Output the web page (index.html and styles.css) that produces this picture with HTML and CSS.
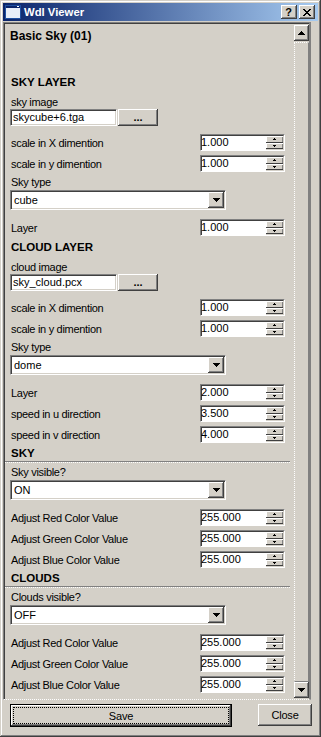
FILE: index.html
```html
<!DOCTYPE html>
<html>
<head>
<meta charset="utf-8">
<title>Wdl Viewer</title>
<link rel="stylesheet" href="styles.css">
</head>
<body>
<div class="window">
  <div class="titlebar">
    <svg class="app-icon" viewBox="0 0 16 14" shape-rendering="crispEdges">
      <rect x="0" y="0" width="16" height="14" fill="#2050a0"/>
      <rect x="1" y="3" width="14" height="10" fill="#e8eef8"/>
      <rect x="1" y="1" width="14" height="2" fill="#0a246a"/>
      <rect x="12" y="1" width="2" height="1" fill="#fff"/>
    </svg>
    <span class="title">Wdl Viewer</span>
    <div class="caption-btns">
      <div class="cap-btn raised">?</div>
      <div class="cap-btn raised">
        <svg class="glyph-x" viewBox="0 0 8 7" shape-rendering="crispEdges"><path d="M0 0h2v1H0z M6 0h2v1H6z M1 1h2v1H1z M5 1h2v1H5z M2 2h4v1H2z M3 3h2v1H3z M2 4h4v1H2z M1 5h2v1H1z M5 5h2v1H5z M0 6h2v1H0z M6 6h2v1H6z" fill="#000"/></svg>
      </div>
    </div>
  </div>

  <div class="pane">
    <div class="content">
      <div class="doc-title">Basic Sky (01)</div>

      <div class="heading">SKY LAYER</div>
      <div class="label">sky image</div>
      <div class="file-row">
        <div class="textbox">skycube+6.tga</div>
        <div class="browse raised">...</div>
      </div>
      <div class="spin-row"><span class="text">scale in X dimention</span>
        <div class="spin"><div class="spin-field">1.000</div><div class="spin-btns"><div class="spin-btn"><svg class="mini" viewBox="0 0 3 2" shape-rendering="crispEdges"><path d="M1 0h1v1H1z M0 1h3v1H0z"/></svg></div><div class="spin-btn"><svg class="mini" viewBox="0 0 3 2" shape-rendering="crispEdges"><path d="M0 0h3v1H0z M1 1h1v1H1z"/></svg></div></div></div>
      </div>
      <div class="spin-row"><span class="text">scale in y dimention</span>
        <div class="spin"><div class="spin-field">1.000</div><div class="spin-btns"><div class="spin-btn"><svg class="mini" viewBox="0 0 3 2" shape-rendering="crispEdges"><path d="M1 0h1v1H1z M0 1h3v1H0z"/></svg></div><div class="spin-btn"><svg class="mini" viewBox="0 0 3 2" shape-rendering="crispEdges"><path d="M0 0h3v1H0z M1 1h1v1H1z"/></svg></div></div></div>
      </div>
      <div class="label">Sky type</div>
      <div class="select"><span class="select-value">cube</span><span class="dd-btn raised"><svg class="arrow" viewBox="0 0 7 4" shape-rendering="crispEdges"><path d="M0 0h7v1H0z M1 1h5v1H1z M2 2h3v1H2z M3 3h1v1H3z"/></svg></span></div>
      <div class="spin-row"><span class="text">Layer</span>
        <div class="spin"><div class="spin-field">1.000</div><div class="spin-btns"><div class="spin-btn"><svg class="mini" viewBox="0 0 3 2" shape-rendering="crispEdges"><path d="M1 0h1v1H1z M0 1h3v1H0z"/></svg></div><div class="spin-btn"><svg class="mini" viewBox="0 0 3 2" shape-rendering="crispEdges"><path d="M0 0h3v1H0z M1 1h1v1H1z"/></svg></div></div></div>
      </div>

      <div class="heading">CLOUD LAYER</div>
      <div class="label">cloud image</div>
      <div class="file-row">
        <div class="textbox">sky_cloud.pcx</div>
        <div class="browse raised">...</div>
      </div>
      <div class="spin-row"><span class="text">scale in X dimention</span>
        <div class="spin"><div class="spin-field">1.000</div><div class="spin-btns"><div class="spin-btn"><svg class="mini" viewBox="0 0 3 2" shape-rendering="crispEdges"><path d="M1 0h1v1H1z M0 1h3v1H0z"/></svg></div><div class="spin-btn"><svg class="mini" viewBox="0 0 3 2" shape-rendering="crispEdges"><path d="M0 0h3v1H0z M1 1h1v1H1z"/></svg></div></div></div>
      </div>
      <div class="spin-row"><span class="text">scale in y dimention</span>
        <div class="spin"><div class="spin-field">1.000</div><div class="spin-btns"><div class="spin-btn"><svg class="mini" viewBox="0 0 3 2" shape-rendering="crispEdges"><path d="M1 0h1v1H1z M0 1h3v1H0z"/></svg></div><div class="spin-btn"><svg class="mini" viewBox="0 0 3 2" shape-rendering="crispEdges"><path d="M0 0h3v1H0z M1 1h1v1H1z"/></svg></div></div></div>
      </div>
      <div class="label">Sky type</div>
      <div class="select"><span class="select-value">dome</span><span class="dd-btn raised"><svg class="arrow" viewBox="0 0 7 4" shape-rendering="crispEdges"><path d="M0 0h7v1H0z M1 1h5v1H1z M2 2h3v1H2z M3 3h1v1H3z"/></svg></span></div>
      <div class="spin-row"><span class="text">Layer</span>
        <div class="spin"><div class="spin-field">2.000</div><div class="spin-btns"><div class="spin-btn"><svg class="mini" viewBox="0 0 3 2" shape-rendering="crispEdges"><path d="M1 0h1v1H1z M0 1h3v1H0z"/></svg></div><div class="spin-btn"><svg class="mini" viewBox="0 0 3 2" shape-rendering="crispEdges"><path d="M0 0h3v1H0z M1 1h1v1H1z"/></svg></div></div></div>
      </div>
      <div class="spin-row"><span class="text">speed in u direction</span>
        <div class="spin"><div class="spin-field">3.500</div><div class="spin-btns"><div class="spin-btn"><svg class="mini" viewBox="0 0 3 2" shape-rendering="crispEdges"><path d="M1 0h1v1H1z M0 1h3v1H0z"/></svg></div><div class="spin-btn"><svg class="mini" viewBox="0 0 3 2" shape-rendering="crispEdges"><path d="M0 0h3v1H0z M1 1h1v1H1z"/></svg></div></div></div>
      </div>
      <div class="spin-row"><span class="text">speed in v direction</span>
        <div class="spin"><div class="spin-field">4.000</div><div class="spin-btns"><div class="spin-btn"><svg class="mini" viewBox="0 0 3 2" shape-rendering="crispEdges"><path d="M1 0h1v1H1z M0 1h3v1H0z"/></svg></div><div class="spin-btn"><svg class="mini" viewBox="0 0 3 2" shape-rendering="crispEdges"><path d="M0 0h3v1H0z M1 1h1v1H1z"/></svg></div></div></div>
      </div>

      <div class="heading ruled">SKY</div>
      <div class="rule"></div>
      <div class="label">Sky visible?</div>
      <div class="select"><span class="select-value">ON</span><span class="dd-btn raised"><svg class="arrow" viewBox="0 0 7 4" shape-rendering="crispEdges"><path d="M0 0h7v1H0z M1 1h5v1H1z M2 2h3v1H2z M3 3h1v1H3z"/></svg></span></div>
      <div class="spin-row"><span class="text">Adjust Red Color Value</span>
        <div class="spin"><div class="spin-field">255.000</div><div class="spin-btns"><div class="spin-btn"><svg class="mini" viewBox="0 0 3 2" shape-rendering="crispEdges"><path d="M1 0h1v1H1z M0 1h3v1H0z"/></svg></div><div class="spin-btn"><svg class="mini" viewBox="0 0 3 2" shape-rendering="crispEdges"><path d="M0 0h3v1H0z M1 1h1v1H1z"/></svg></div></div></div>
      </div>
      <div class="spin-row"><span class="text">Adjust Green Color Value</span>
        <div class="spin"><div class="spin-field">255.000</div><div class="spin-btns"><div class="spin-btn"><svg class="mini" viewBox="0 0 3 2" shape-rendering="crispEdges"><path d="M1 0h1v1H1z M0 1h3v1H0z"/></svg></div><div class="spin-btn"><svg class="mini" viewBox="0 0 3 2" shape-rendering="crispEdges"><path d="M0 0h3v1H0z M1 1h1v1H1z"/></svg></div></div></div>
      </div>
      <div class="spin-row"><span class="text">Adjust Blue Color Value</span>
        <div class="spin"><div class="spin-field">255.000</div><div class="spin-btns"><div class="spin-btn"><svg class="mini" viewBox="0 0 3 2" shape-rendering="crispEdges"><path d="M1 0h1v1H1z M0 1h3v1H0z"/></svg></div><div class="spin-btn"><svg class="mini" viewBox="0 0 3 2" shape-rendering="crispEdges"><path d="M0 0h3v1H0z M1 1h1v1H1z"/></svg></div></div></div>
      </div>

      <div class="heading ruled">CLOUDS</div>
      <div class="rule"></div>
      <div class="label">Clouds visible?</div>
      <div class="select"><span class="select-value">OFF</span><span class="dd-btn raised"><svg class="arrow" viewBox="0 0 7 4" shape-rendering="crispEdges"><path d="M0 0h7v1H0z M1 1h5v1H1z M2 2h3v1H2z M3 3h1v1H3z"/></svg></span></div>
      <div class="spin-row"><span class="text">Adjust Red Color Value</span>
        <div class="spin"><div class="spin-field">255.000</div><div class="spin-btns"><div class="spin-btn"><svg class="mini" viewBox="0 0 3 2" shape-rendering="crispEdges"><path d="M1 0h1v1H1z M0 1h3v1H0z"/></svg></div><div class="spin-btn"><svg class="mini" viewBox="0 0 3 2" shape-rendering="crispEdges"><path d="M0 0h3v1H0z M1 1h1v1H1z"/></svg></div></div></div>
      </div>
      <div class="spin-row"><span class="text">Adjust Green Color Value</span>
        <div class="spin"><div class="spin-field">255.000</div><div class="spin-btns"><div class="spin-btn"><svg class="mini" viewBox="0 0 3 2" shape-rendering="crispEdges"><path d="M1 0h1v1H1z M0 1h3v1H0z"/></svg></div><div class="spin-btn"><svg class="mini" viewBox="0 0 3 2" shape-rendering="crispEdges"><path d="M0 0h3v1H0z M1 1h1v1H1z"/></svg></div></div></div>
      </div>
      <div class="spin-row"><span class="text">Adjust Blue Color Value</span>
        <div class="spin"><div class="spin-field">255.000</div><div class="spin-btns"><div class="spin-btn"><svg class="mini" viewBox="0 0 3 2" shape-rendering="crispEdges"><path d="M1 0h1v1H1z M0 1h3v1H0z"/></svg></div><div class="spin-btn"><svg class="mini" viewBox="0 0 3 2" shape-rendering="crispEdges"><path d="M0 0h3v1H0z M1 1h1v1H1z"/></svg></div></div></div>
      </div>
    </div>

    <div class="scrollbar">
      <div class="sb-btn raised"><svg class="arrow" viewBox="0 0 7 4" shape-rendering="crispEdges"><path d="M3 0h1v1H3z M2 1h3v1H2z M1 2h5v1H1z M0 3h7v1H0z"/></svg></div>
      <div class="sb-thumb"></div>
      <div class="sb-btn raised"><svg class="arrow" viewBox="0 0 7 4" shape-rendering="crispEdges"><path d="M0 0h7v1H0z M1 1h5v1H1z M2 2h3v1H2z M3 3h1v1H3z"/></svg></div>
    </div>
  </div>

  <div class="footer">
    <div class="btn btn-default raised"><span class="focus">Save</span></div>
    <div class="btn btn-close raised">Close</div>
  </div>
</div>
</body>
</html>
```

FILE: styles.css
```css
* { box-sizing: border-box; margin: 0; padding: 0; }

html, body {
  width: 321px;
  height: 737px;
  overflow: hidden;
  background: #d4d0c8;
}

body {
  font-family: "Liberation Sans", Arial, sans-serif;
  font-size: 11px;
  color: #000;
}

.raised {
  background: #d4d0c8;
  box-shadow: inset -1px -1px #404040, inset 1px 1px #fff, inset -2px -2px #808080, inset 2px 2px #d4d0c8;
}

.window {
  width: 321px;
  height: 737px;
  padding: 3px;
  background: #d4d0c8;
  box-shadow: inset -1px -1px #404040, inset 1px 1px #d4d0c8, inset -2px -2px #808080, inset 2px 2px #fff;
  display: flex;
  flex-direction: column;
}

/* title bar */
.titlebar {
  flex: none;
  height: 18px;
  margin-bottom: 1px;
  padding: 0 3px 0 2px;
  background: linear-gradient(to right, #0a246a, #a6caf0);
  display: flex;
  align-items: center;
}

.app-icon { width: 16px; height: 14px; flex: none; }

.title {
  margin-left: 3px;
  color: #fff;
  font-weight: bold;
  font-size: 11.3px;
  white-space: nowrap;
}

.caption-btns {
  margin-left: auto;
  display: flex;
  gap: 2px;
}

.cap-btn {
  width: 16px;
  height: 14px;
  display: flex;
  align-items: center;
  justify-content: center;
  font-weight: bold;
  font-size: 11px;
  line-height: 14px;
  padding-right: 1px;
}

.glyph-x { width: 8px; height: 7px; display: block; margin-left: 1px; }

/* scroll pane */
.pane {
  flex: none;
  width: 308px;
  height: 678px;
  display: flex;
  border-top: 1px solid #808080;
  border-left: 1px solid #808080;
  border-right: 2px solid #808080;
  border-bottom: 1px dotted #fff;
  box-shadow: inset 1px 1px #404040;
}

.content {
  flex: 1;
  min-width: 0;
  padding: 4px 9px 0 6px;
  display: flex;
  flex-direction: column;
}

.doc-title {
  height: 18px;
  line-height: 18px;
  font-weight: bold;
  font-size: 12px;
  margin-bottom: 28px;
}

.heading {
  height: 18px;
  line-height: 18px;
  font-weight: bold;
  font-size: 11.5px;
  padding-left: 1px;
}

.heading.ruled {
  height: 16px;
  line-height: 16px;
}

.rule {
  height: 2px;
  margin: 0 -5px;
  border-top: 1px solid #808080;
  border-bottom: 1px dotted #fff;
}

.label {
  height: 14px;
  line-height: 14px;
  letter-spacing: -0.3px;
  padding-left: 1px;
  white-space: nowrap;
}

.heading + .label { margin-top: 4px; }
.rule + .label { margin-top: 2px; }
.spin-row + .label { margin-top: 1px; }
.label + .select { margin-top: 1px; }
.select + .spin-row { margin-top: 7px; }
.file-row + .spin-row { margin-top: 6px; }

/* file picker row */
.file-row {
  height: 17px;
  display: flex;
}

.textbox {
  width: 107px;
  height: 17px;
  background: #fff;
  border: 1px solid;
  border-color: #808080 #fff #fff #808080;
  box-shadow: inset 1px 1px #404040, inset -1px -1px #d4d0c8;
  padding-left: 2px;
  line-height: 15px;
  white-space: nowrap;
  overflow: hidden;
}

.browse {
  width: 40px;
  height: 17px;
  margin-left: 1px;
  display: flex;
  align-items: center;
  justify-content: center;
  font-weight: bold;
  font-size: 11px;
  line-height: 15px;
  padding-bottom: 1px;
}

/* spinner rows */
.spin-row {
  height: 21px;
  display: flex;
  align-items: center;
  justify-content: space-between;
}

.spin-row .text {
  letter-spacing: -0.3px;
  padding-left: 1px;
  white-space: nowrap;
}

.spin {
  width: 85px;
  height: 17px;
  display: flex;
  background: #fff;
  border: 1px solid;
  border-color: #808080 #fff #fff #808080;
}

.spin-field {
  flex: 1;
  background: #fff;
  box-shadow: inset 1px 1px #404040;
  line-height: 15px;
  white-space: nowrap;
  overflow: hidden;
}

.spin-btns {
  width: 18px;
  flex: none;
  display: flex;
  flex-direction: column;
  border-top: 1px solid #404040;
  border-right: 1px solid #d4d0c8;
  border-bottom: 1px solid #d4d0c8;
}

.spin-btn {
  flex: 1;
  background: #d4d0c8;
  box-shadow: inset 0 -1px #404040, inset 1px 1px #fff, inset -1px 0 #808080;
  display: flex;
  align-items: center;
  justify-content: center;
}

.mini { width: 3px; height: 2px; display: block; fill: #000; }

/* select */
.select {
  width: 216px;
  height: 20px;
  display: flex;
  background: #fff;
  border: 1px solid;
  border-color: #808080 #fff #fff #808080;
  box-shadow: inset 1px 1px #404040, inset -1px -1px #d4d0c8;
  padding: 1px;
}

.select-value {
  flex: 1;
  padding-left: 2px;
  line-height: 16px;
}

.dd-btn {
  width: 16px;
  height: 16px;
  display: flex;
  align-items: center;
  justify-content: center;
}

.arrow { width: 7px; height: 4px; display: block; fill: #000; }

/* scrollbar */
.scrollbar {
  width: 15px;
  flex: none;
  display: flex;
  flex-direction: column;
  padding: 2px 0 1px;
}

.sb-btn {
  height: 16px;
  flex: none;
  display: flex;
  align-items: center;
  justify-content: center;
}

.sb-thumb {
  flex: 1;
  margin-top: 1px;
  border-left: 1px dotted #fff;
  border-top: 1px dotted #fff;
  border-right: 1px solid #808080;
  border-bottom: 1px solid #808080;
}

/* footer */
.footer {
  flex: 1;
  display: flex;
  align-items: flex-start;
  padding: 4px 6px 0 7px;
}

.btn {
  height: 22px;
  display: flex;
  align-items: center;
  justify-content: center;
  letter-spacing: -0.2px;
}

.btn-default {
  width: 222px;
  height: 23px;
  border: 1px solid #000;
}

.btn-default .focus {
  align-self: stretch;
  flex: 1;
  margin: 2px;
  border: 1px dotted #000;
  display: flex;
  align-items: center;
  justify-content: center;
}

.btn-close {
  width: 54px;
  margin-left: auto;
}
```
